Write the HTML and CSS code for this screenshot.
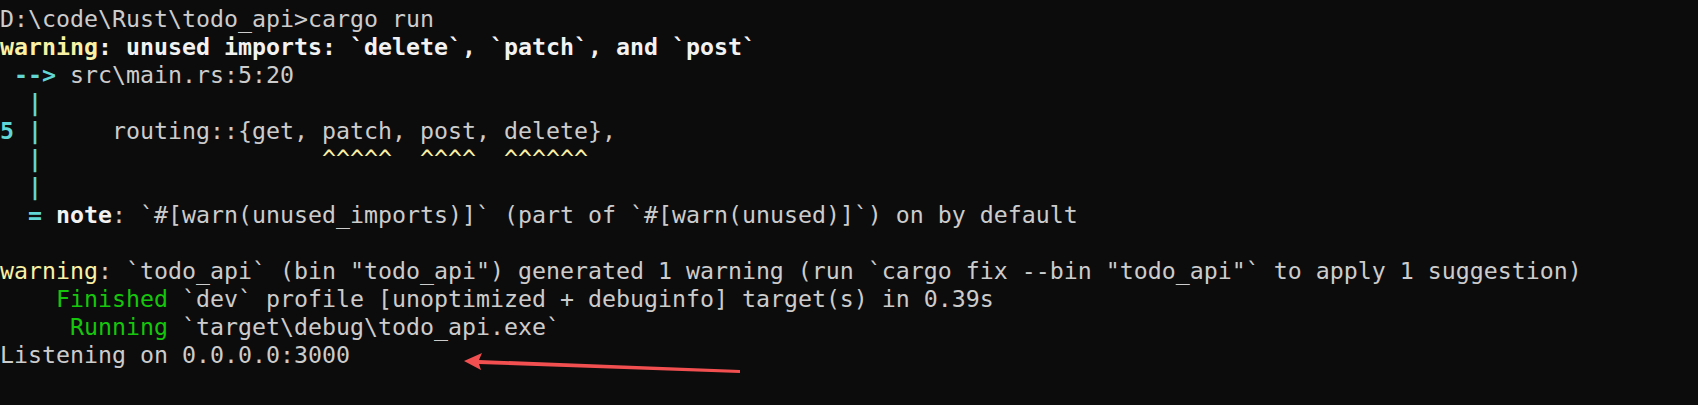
FILE: index.html
```html
<!DOCTYPE html>
<html>
<head>
<meta charset="utf-8">
<link rel="stylesheet" href="styles.css">
</head>
<body>
<main class="term">
<pre class="out"><span>D:\code\Rust\todo_api&gt;cargo run</span>
<span class="y b">warning</span><span class="w b">: unused imports: `delete`, `patch`, and `post`</span>
<span class="c b"> --&gt;</span> src\main.rs:5:20
<span class="c b">  |</span>
<span class="c b">5 |</span>     routing::{get, patch, post, delete},
<span class="c b">  |</span>                    <span class="y">^^^^^  ^^^^  ^^^^^^</span>
<span class="c b">  |</span>
<span class="c b">  =</span> <span class="w b">note</span>: `#[warn(unused_imports)]` (part of `#[warn(unused)]`) on by default

<span class="y">warning</span>: `todo_api` (bin "todo_api") generated 1 warning (run `cargo fix --bin "todo_api"` to apply 1 suggestion)
    <span class="g">Finished</span> `dev` profile [unoptimized + debuginfo] target(s) in 0.39s
     <span class="g">Running</span> `target\debug\todo_api.exe`
Listening on 0.0.0.0:3000</pre>
<svg class="arrow" width="300" height="40" viewBox="0 0 300 40">
  <polygon points="4,16 22,8 19,15 280,25 280,28 19,19 21,25" fill="#f25050"/>
</svg>
</main>
</body>
</html>
```
FILE: styles.css
```css
html, body {
  margin: 0;
  padding: 0;
  background: #0c0c0c;
  width: 1698px;
  height: 405px;
  overflow: hidden;
}
.term {
  position: relative;
  width: 1698px;
  height: 405px;
}
.out {
  margin: 0;
  padding: 5px 0 0 0;
  font-family: "DejaVu Sans Mono", "Liberation Mono", monospace;
  font-size: 23.25px;
  line-height: 28px;
  color: #cccccc;
}
.b { font-weight: bold; }
.y { color: #f9f1a5; }
.w { color: #f2f2f2; }
.c { color: #61d6d6; }
.g { color: #16c60c; }
.arrow {
  position: absolute;
  left: 460px;
  top: 345px;
}
```
